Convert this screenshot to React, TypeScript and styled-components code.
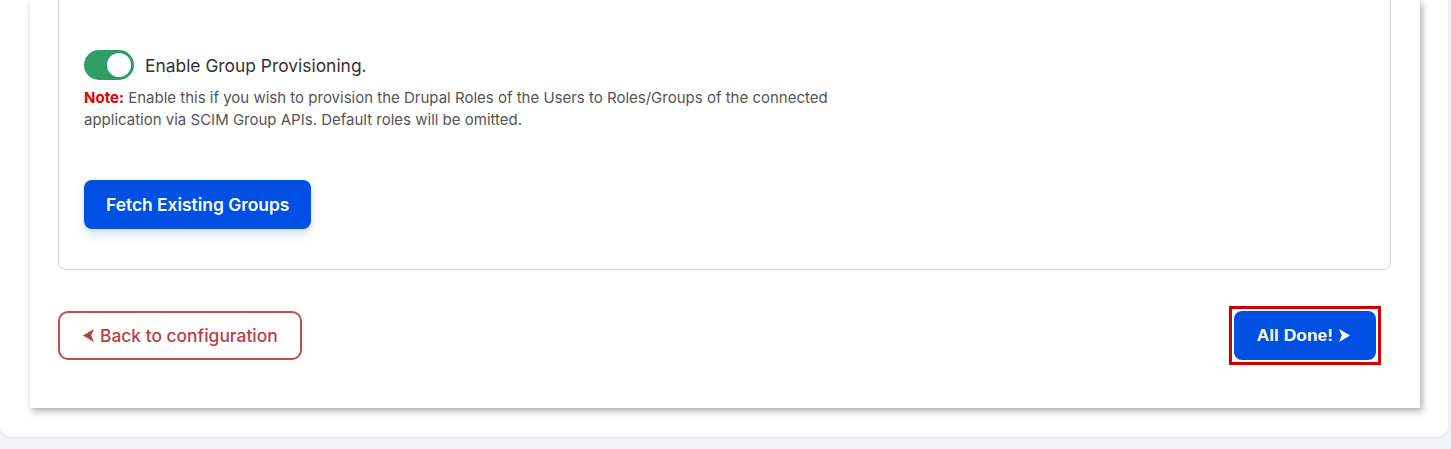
import React, { useState } from 'react';
import styled, { createGlobalStyle } from 'styled-components';

// --- Estilos globais ---
const GlobalStyle = createGlobalStyle`
    html, body {
        margin: 0;
        padding: 0;
        background: #f3f5f9;
    }
    body {
        font-family: Inter, "Noto Sans", sans-serif;
        color: #333;
    }
`;

const Page = styled.div`
    height: 449px;
    padding-bottom: 12px;
    box-sizing: border-box;
`;

const OuterContainer = styled.div`
    height: 100%;
    margin-right: 3px;
    background: #ffffff;
    border-radius: 0 0 12px 12px;
    box-shadow: 0 1px 3px rgba(0, 0, 0, 0.08);
    padding: 0 28px 30px 30px;
    box-sizing: border-box;
    display: flex;
    flex-direction: column;
`;

const Card = styled.div`
    flex: 1;
    background: #ffffff;
    box-shadow: 2px 3px 7px rgba(0, 0, 0, 0.35);
    padding: 0 29px 43px 28px;
    display: flex;
    flex-direction: column;
`;

const Panel = styled.div`
    border: 1px solid #d6d6d6;
    border-top: none;
    border-radius: 0 0 8px 8px;
    padding: 50px 25px 40px 25px;
    display: flex;
    flex-direction: column;
    align-items: flex-start;
`;

const ToggleRow = styled.label`
    display: flex;
    align-items: center;
    gap: 11px;
    cursor: pointer;
    font-size: 17.4px;
    color: #333;
`;

const ToggleTrack = styled.span<{ $on: boolean }>`
    position: relative;
    width: 50px;
    height: 30px;
    border-radius: 15px;
    background: ${(p) => (p.$on ? '#2e9e66' : '#bbb')};
    flex-shrink: 0;
    transition: background 0.2s;
`;

const ToggleKnob = styled.span<{ $on: boolean }>`
    position: absolute;
    top: 3px;
    left: ${(p) => (p.$on ? '23px' : '3px')};
    width: 24px;
    height: 24px;
    border-radius: 50%;
    background: #fff;
    transition: left 0.2s;
`;

const Note = styled.p`
    margin: 7px 0 0 0;
    max-width: 800px;
    font-size: 15px;
    line-height: 22px;
    color: #555;
`;

const NoteLabel = styled.strong`
    color: #e00000;
    font-weight: 700;
`;

const PrimaryButton = styled.button`
    margin-top: 49px;
    height: 49px;
    padding: 0 22px;
    border: none;
    border-radius: 8px;
    background: #0051e3;
    color: #fff;
    font-family: Inter, "Noto Sans", sans-serif;
    font-size: 17.4px;
    font-weight: 600;
    box-shadow: 0 5px 10px rgba(0, 81, 227, 0.18);
    cursor: pointer;
`;

const Footer = styled.div`
    margin-top: 36px;
    display: flex;
    justify-content: space-between;
    align-items: center;
`;

const BackButton = styled.button`
    height: 49px;
    padding: 0 22px 0 23px;
    display: flex;
    align-items: center;
    gap: 6px;
    background: #fff;
    border: 2px solid #c44a4b;
    border-radius: 10px;
    color: #b9403f;
    font-family: Inter, "Noto Sans", sans-serif;
    font-size: 17.4px;
    font-weight: 500;
    cursor: pointer;
`;

// moldura vermelha de destaque em volta do botão final
const Highlight = styled.span`
    display: inline-flex;
    margin-right: 10px;
    padding: 2px;
    border: 3px solid #d40000;
`;

const DoneButton = styled.button`
    height: 49px;
    padding: 0 26px 0 23px;
    display: flex;
    align-items: center;
    gap: 6px;
    border: none;
    border-radius: 8px;
    background: #0051e3;
    color: #fff;
    font-family: "Liberation Sans", Arial, sans-serif;
    font-size: 17.4px;
    font-weight: 700;
    cursor: pointer;
`;

// seta com entalhe (estilo ➤)
const Arrow: React.FC<{ dir: 'left' | 'right' }> = ({ dir }) => (
    <svg
        width="11"
        height="13"
        viewBox="0 0 11 13"
        style={{ transform: dir === 'left' ? 'scaleX(-1)' : undefined }}
    >
        <path d="M0 0 L11 6.5 L0 13 L2.8 6.5 Z" fill="currentColor" />
    </svg>
);

// --- Componente ---
const App: React.FC = () => {
    const [enabled, setEnabled] = useState(true);

    return (
        <Page>
            <GlobalStyle />
            <OuterContainer>
                <Card>
                    <Panel>
                        <ToggleRow onClick={() => setEnabled(!enabled)}>
                            <ToggleTrack $on={enabled}>
                                <ToggleKnob $on={enabled} />
                            </ToggleTrack>
                            Enable Group Provisioning.
                        </ToggleRow>
                        <Note>
                            <NoteLabel>Note:</NoteLabel> Enable this if you wish to provision the Drupal Roles of
                            the Users to Roles/Groups of the connected application via SCIM Group APIs. Default
                            roles will be omitted.
                        </Note>
                        <PrimaryButton>Fetch Existing Groups</PrimaryButton>
                    </Panel>
                    <Footer>
                        <BackButton>
                            <Arrow dir="left" />
                            Back to configuration
                        </BackButton>
                        <Highlight>
                            <DoneButton>
                                All Done!
                                <Arrow dir="right" />
                            </DoneButton>
                        </Highlight>
                    </Footer>
                </Card>
            </OuterContainer>
        </Page>
    );
};

export default App;
